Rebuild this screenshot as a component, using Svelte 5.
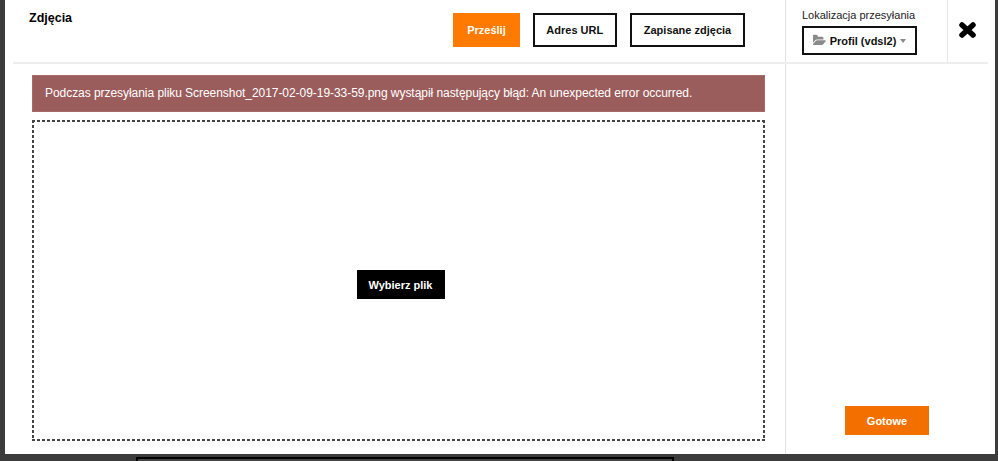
<script>
  const tabs = [
    { label: 'Prześlij', active: true },
    { label: 'Adres URL' },
    { label: 'Zapisane zdjęcia' }
  ]
</script>

<div class="page">
  <div class="behind"></div>
  <div class="modal">
    <div class="header">
      <div class="head-main">
        <h2>Zdjęcia</h2>
        <div class="tabs">
          {#each tabs as tab}
            <button class="tab" class:active={tab.active}>{tab.label}</button>
          {/each}
        </div>
      </div>
      <div class="head-loc">
        <span class="loc-label">Lokalizacja przesyłania</span>
        <button class="loc-btn">
          <svg class="folder" viewBox="0 0 1792 1792" aria-hidden="true">
            <path d="M1781 931q0 35-35 74l-336 396q-43 51-120.5 86.5t-143.5 35.5h-1088q-34 0-60.5-13t-26.5-43q0-35 35-74l336-396q43-51 120.5-86.5t143.5-35.5h1088q34 0 60.5 13t26.5 43zm-343-344v160h-832q-94 0-197 47.5t-164 119.5l-337 396-5 6q0-4-.5-12.5t-.5-12.5v-960q0-92 66-158t158-66h320q92 0 158 66t66 158v32h544q92 0 158 66t66 158z" />
          </svg>
          Profil (vdsl2)
          <span class="caret"></span>
        </button>
      </div>
      <div class="head-close">
        <svg class="close" viewBox="0 0 17 16" aria-hidden="true">
          <path d="M3 3L14 13M14 3L3 13" />
        </svg>
      </div>
    </div>
    <div class="content">
      <div class="main">
        <div class="alert">Podczas przesyłania pliku Screenshot_2017-02-09-19-33-59.png wystąpił następujący błąd: An unexpected error occurred.</div>
        <div class="drop">
          <button class="pick">Wybierz plik</button>
        </div>
      </div>
      <div class="side">
        <button class="done">Gotowe</button>
      </div>
    </div>
  </div>
</div>

<style>
  :global(body) {
    background: #3c3c3c;
    overflow: hidden;
  }
  .page {
    position: relative;
    height: 461px;
    overflow: hidden;
    font-family: "Liberation Sans", Arial, sans-serif;
    color: #000;
  }
  .behind {
    position: absolute;
    left: 136px;
    top: 457px;
    width: 534px;
    height: 20px;
    border: 2px solid #000;
    background: #444;
  }
  .modal {
    position: relative;
    margin-left: 5px;
    width: 990px;
    height: 454px;
    background: #fff;
    display: flex;
    flex-direction: column;
    box-sizing: border-box;
    padding-left: 8px;
    padding-right: 7px;
  }
  button {
    font-family: inherit;
    cursor: pointer;
    margin: 0;
  }
  .header {
    display: flex;
    height: 64px;
    box-sizing: border-box;
    border-bottom: 2px solid #eee;
    flex: none;
  }
  .head-main {
    width: 772px;
    box-sizing: border-box;
    display: flex;
    justify-content: space-between;
    padding: 13px 40px 0 16px;
  }
  h2 {
    margin: 0;
    font-size: 12.5px;
    line-height: 11px;
    font-weight: bold;
  }
  .tabs {
    display: flex;
    gap: 13px;
    align-items: flex-start;
  }
  .tab {
    height: 34px;
    padding: 0 11.8px;
    background: #fff;
    border: 2px solid #111;
    font-size: 11px;
    font-weight: bold;
    color: #111;
  }
  .tab.active {
    background: #ff7a00;
    border-color: #ff7a00;
    color: #fff;
  }
  .head-loc {
    width: 162px;
    box-sizing: border-box;
    border-left: 1px solid #e2e2e2;
    padding: 8px 0 0 16px;
    display: flex;
    flex-direction: column;
    align-items: flex-start;
    gap: 4px;
  }
  .loc-label {
    font-size: 11px;
    line-height: 14px;
    color: #222;
  }
  .loc-btn {
    width: 115px;
    height: 29px;
    padding: 0;
    background: #fff;
    border: 2px solid #111;
    font-size: 11px;
    font-weight: bold;
    color: #111;
    display: flex;
    align-items: center;
    justify-content: center;
    gap: 4px;
  }
  .folder {
    width: 13px;
    height: 13px;
    fill: #8a8a8a;
  }
  .caret {
    width: 0;
    height: 0;
    border-left: 3.5px solid transparent;
    border-right: 3.5px solid transparent;
    border-top: 4px solid #8a8a8a;
  }
  .head-close {
    flex: 1;
    border-left: 1px solid #e8e8e8;
    display: flex;
    align-items: flex-start;
    justify-content: center;
    padding: 22px 2px 0 0;
  }
  .close {
    width: 17px;
    height: 16px;
    fill: none;
    stroke: #000;
    stroke-width: 5.5;
    stroke-linecap: round;
  }
  .content {
    flex: 1;
    display: flex;
    min-height: 0;
  }
  .main {
    width: 772px;
    box-sizing: border-box;
    padding: 11px 20px 13px 19px;
    display: flex;
    flex-direction: column;
    gap: 8px;
  }
  .alert {
    height: 37px;
    flex: none;
    box-sizing: border-box;
    background: #9b5c5c;
    border: 1px solid #a56b6b;
    color: #fff;
    font-size: 12px;
    letter-spacing: -0.05px;
    line-height: 34px;
    padding-left: 12px;
    white-space: nowrap;
  }
  .drop {
    flex: 1;
    display: flex;
    align-items: center;
    justify-content: center;
    background:
      repeating-linear-gradient(to right, #444 0 3px, transparent 3px 5px) top / 100% 2px no-repeat,
      repeating-linear-gradient(to right, #444 0 3px, transparent 3px 5px) bottom / 100% 2px no-repeat,
      repeating-linear-gradient(to bottom, #444 0 3px, transparent 3px 5px) left / 2px 100% no-repeat,
      repeating-linear-gradient(to bottom, #444 0 3px, transparent 3px 5px) right / 2px 100% no-repeat;
  }
  .pick {
    width: 88px;
    height: 29px;
    padding: 0;
    border: 0;
    background: #000;
    color: #fff;
    font-size: 11px;
    font-weight: bold;
    margin: 8px 0 0 4px;
  }
  .side {
    flex: 1;
    border-left: 1px solid #e2e2e2;
    display: flex;
    justify-content: flex-end;
    align-items: flex-end;
    padding: 0 59px 19px 0;
  }
  .done {
    width: 84px;
    height: 29px;
    padding: 0;
    border: 0;
    background: #f36f00;
    color: #fff;
    font-size: 11px;
    font-weight: bold;
  }
</style>
